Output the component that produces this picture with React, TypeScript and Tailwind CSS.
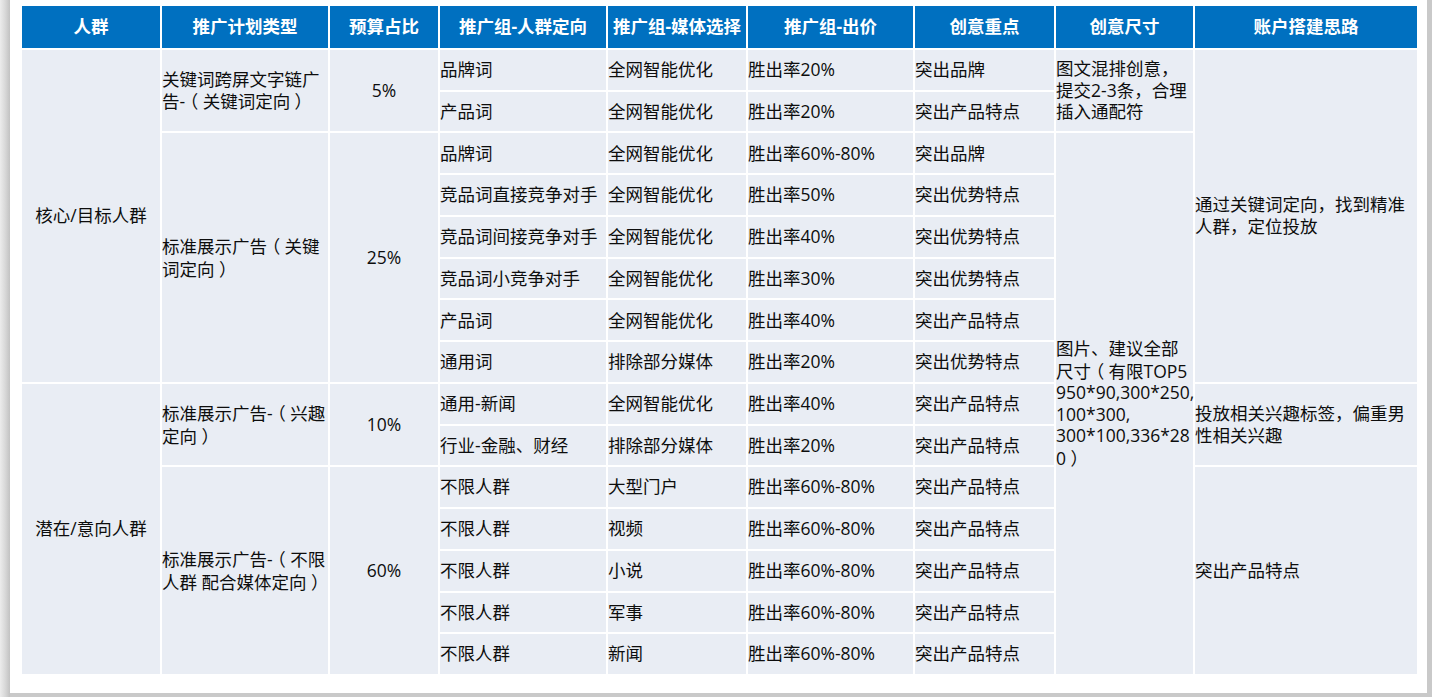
import React from "react";

const font = {
  fontFamily: '"Open Sans", "Noto Sans CJK SC", sans-serif',
};

const L = () => (
  <span className="inline-block w-[1em] text-center [font-feature-settings:'halt']" style={{ fontFamily: '"Noto Sans CJK SC", sans-serif' }}>
    （
  </span>
);
const R = () => (
  <span className="inline-block w-[1em] text-center [font-feature-settings:'halt']" style={{ fontFamily: '"Noto Sans CJK SC", sans-serif' }}>
    ）
  </span>
);

type Cell = {
  text: React.ReactNode;
  col: string;
  row: string;
  align?: "center" | "left";
};

const headers = [
  "人群",
  "推广计划类型",
  "预算占比",
  "推广组-人群定向",
  "推广组-媒体选择",
  "推广组-出价",
  "创意重点",
  "创意尺寸",
  "账户搭建思路",
];

const rows: [string, string, string, string][] = [
  ["品牌词", "全网智能优化", "胜出率20%", "突出品牌"],
  ["产品词", "全网智能优化", "胜出率20%", "突出产品特点"],
  ["品牌词", "全网智能优化", "胜出率60%-80%", "突出品牌"],
  ["竞品词直接竞争对手", "全网智能优化", "胜出率50%", "突出优势特点"],
  ["竞品词间接竞争对手", "全网智能优化", "胜出率40%", "突出优势特点"],
  ["竞品词小竞争对手", "全网智能优化", "胜出率30%", "突出优势特点"],
  ["产品词", "全网智能优化", "胜出率40%", "突出产品特点"],
  ["通用词", "排除部分媒体", "胜出率20%", "突出优势特点"],
  ["通用-新闻", "全网智能优化", "胜出率40%", "突出产品特点"],
  ["行业-金融、财经", "排除部分媒体", "胜出率20%", "突出产品特点"],
  ["不限人群", "大型门户", "胜出率60%-80%", "突出产品特点"],
  ["不限人群", "视频", "胜出率60%-80%", "突出产品特点"],
  ["不限人群", "小说", "胜出率60%-80%", "突出产品特点"],
  ["不限人群", "军事", "胜出率60%-80%", "突出产品特点"],
  ["不限人群", "新闻", "胜出率60%-80%", "突出产品特点"],
];

const rowStart = [
  "row-start-2",
  "row-start-3",
  "row-start-4",
  "row-start-5",
  "row-start-6",
  "row-start-7",
  "row-start-8",
  "row-start-9",
  "row-start-10",
  "row-start-11",
  "row-start-12",
  "row-start-13",
  "row-start-14",
  "row-start-15",
  "row-start-16",
];

const dataCols = ["col-start-4", "col-start-5", "col-start-6", "col-start-7"];

const spanCells: Cell[] = [
  { text: "核心/目标人群", col: "col-start-1", row: "row-start-2 row-span-8", align: "center" },
  { text: "潜在/意向人群", col: "col-start-1", row: "row-start-10 row-span-7", align: "center" },
  {
    text: (
      <>
        关键词跨屏文字链广
        <br />
        告-<L />关键词定向<R />
      </>
    ),
    col: "col-start-2",
    row: "row-start-2 row-span-2",
  },
  {
    text: (
      <>
        标准展示广告<L />关键
        <br />
        词定向<R />
      </>
    ),
    col: "col-start-2",
    row: "row-start-4 row-span-6",
  },
  {
    text: (
      <>
        标准展示广告-<L />兴趣
        <br />
        定向<R />
      </>
    ),
    col: "col-start-2",
    row: "row-start-10 row-span-2",
  },
  {
    text: (
      <>
        标准展示广告-<L />不限
        <br />
        人群 配合媒体定向<R />
      </>
    ),
    col: "col-start-2",
    row: "row-start-12 row-span-5",
  },
  { text: "5%", col: "col-start-3", row: "row-start-2 row-span-2", align: "center" },
  { text: "25%", col: "col-start-3", row: "row-start-4 row-span-6", align: "center" },
  { text: "10%", col: "col-start-3", row: "row-start-10 row-span-2", align: "center" },
  { text: "60%", col: "col-start-3", row: "row-start-12 row-span-5", align: "center" },
  {
    text: (
      <>
        图文混排创意，
        <br />
        提交2-3条，合理
        <br />
        插入通配符
      </>
    ),
    col: "col-start-8",
    row: "row-start-2 row-span-2",
  },
  {
    text: (
      <>
        图片、建议全部
        <br />
        尺寸<L />有限TOP5
        <br />
        950*90,300*250,
        <br />
        100*300,
        <br />
        300*100,336*28
        <br />
        0<R />
      </>
    ),
    col: "col-start-8",
    row: "row-start-4 row-span-13",
  },
  {
    text: (
      <>
        通过关键词定向，找到精准
        <br />
        人群，定位投放
      </>
    ),
    col: "col-start-9",
    row: "row-start-2 row-span-8",
  },
  {
    text: (
      <>
        投放相关兴趣标签，偏重男
        <br />
        性相关兴趣
      </>
    ),
    col: "col-start-9",
    row: "row-start-10 row-span-2",
  },
  { text: "突出产品特点", col: "col-start-9", row: "row-start-12 row-span-5" },
];

const headerCols = [
  "col-start-1",
  "col-start-2",
  "col-start-3",
  "col-start-4",
  "col-start-5",
  "col-start-6",
  "col-start-7",
  "col-start-8",
  "col-start-9",
];

export default function App() {
  return (
    <div className="relative flex h-[697px] w-[1432px] overflow-hidden bg-[#c9c9c9]" style={font}>
      <div className="h-full w-[10px] bg-gradient-to-r from-[#ececec] via-[#d9d9d9] to-[#c2c2c2]" />
      <div className="h-[693px] w-[1417px] bg-white pl-[12px] pt-[6px]">
        <div className="grid h-[668px] w-[1395px] grid-cols-[138px_166px_108px_166px_138px_165px_139px_137px_222px] grid-rows-[42px_repeat(15,minmax(0,1fr))] gap-[2px] bg-white text-[17.5px] leading-[21.5px] text-[#0d0d0d]">
          {headers.map((h, i) => (
            <div
              key={h}
              className={`${headerCols[i]} row-start-1 flex items-center justify-center whitespace-nowrap bg-[#0070c0] text-[17.5px] font-bold text-white`}
            >
              {h}
            </div>
          ))}
          {spanCells.map((c, i) => (
            <div
              key={i}
              className={`${c.col} ${c.row} flex items-center whitespace-nowrap bg-[#e9edf4] ${
                c.align === "center" ? "justify-center text-center" : "justify-start"
              }`}
            >
              <div>{c.text}</div>
            </div>
          ))}
          {rows.map((r, ri) =>
            r.map((t, ci) => (
              <div
                key={`${ri}-${ci}`}
                className={`${dataCols[ci]} ${rowStart[ri]} flex items-center whitespace-nowrap bg-[#e9edf4]`}
              >
                {t}
              </div>
            ))
          )}
        </div>
      </div>
    </div>
  );
}
